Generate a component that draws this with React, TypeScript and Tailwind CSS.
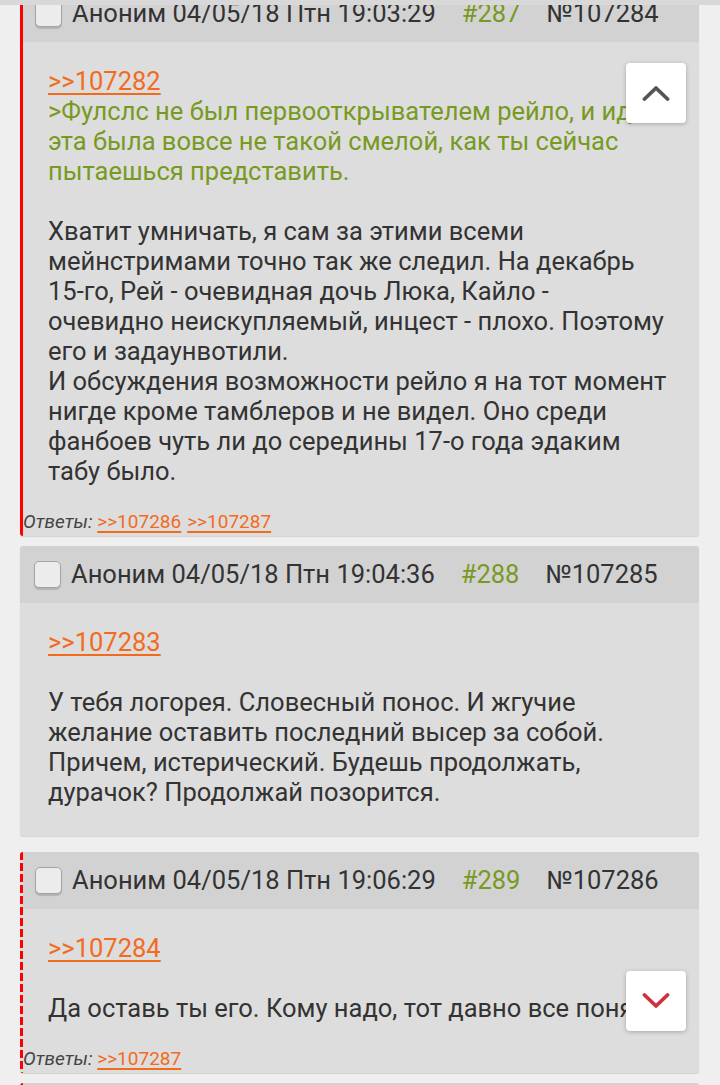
import React from "react";

type Post = {
  num: number;
  id: number;
  time: string;
  border: "solid" | "dashed" | "none";
  body?: React.ReactNode;
  replies?: number[];
  mb: string;
  pb: string;
};

function Link({ children }: { children: React.ReactNode }) {
  return (
    <span className="text-[#f26b1d] underline decoration-[1.5px] underline-offset-[3px]">{children}</span>
  );
}

function Green({ children }: { children: React.ReactNode }) {
  return <span className="text-[#789922]">{children}</span>;
}

function Checkbox() {
  return (
    <div className="h-[27px] w-[27px] shrink-0 rounded-[5px] border-[1.5px] border-[#a4a4a4] bg-[#ececec] shadow-[0_2px_1px_rgba(0,0,0,0.15)]" />
  );
}

function Strip({ kind }: { kind: Post["border"] }) {
  if (kind === "none") return null;
  if (kind === "solid") return <div className="w-[3px] shrink-0 self-stretch bg-[#ff0000]" />;
  return (
    <div className="w-[3px] shrink-0 self-stretch bg-[repeating-linear-gradient(to_bottom,#ff0000_0px,#ff0000_8px,transparent_8px,transparent_11px)]" />
  );
}

function PostCard({ p }: { p: Post }) {
  const edge = p.border === "none";
  return (
    <div className={`${p.mb} flex overflow-hidden rounded-[3px] bg-[#dddddd] shadow-[0_1px_1px_rgba(0,0,0,0.12)]`}>
      <Strip kind={p.border} />
      <div className="min-w-0 flex-1">
        <div className={`flex h-[57px] items-center bg-[#d2d2d2] ${edge ? "pl-[14px]" : "pl-[12px]"}`}>
          {p.body && (
            <>
              <Checkbox />
              <span className="ml-[10px] whitespace-nowrap text-[25.5px] text-[#333]">Аноним 04/05/18 Птн {p.time}</span>
              <span className="ml-[26px] text-[25.5px] text-[#789922]">#{p.num}</span>
              <span className="ml-[26px] text-[25.5px] text-[#333]">№{p.id}</span>
            </>
          )}
        </div>
        {p.body && (
          <div
            className={`${edge ? "px-[28px]" : "px-[25px]"} pt-[24px] ${p.pb} overflow-hidden whitespace-nowrap text-[25.5px] leading-[30px] text-[#333]`}
          >
            {p.body}
          </div>
        )}
        {p.replies && (
          <div className="h-[26px] whitespace-nowrap text-[19px] leading-[24px] text-[#444]">
            <span className="italic">Ответы: </span>
            {p.replies.map((r) => (
              <span key={r} className="mr-[6px]">
                <Link>&gt;&gt;{r}</Link>
              </span>
            ))}
          </div>
        )}
      </div>
    </div>
  );
}

const posts: Post[] = [
  {
    num: 287,
    id: 107284,
    time: "19:03:29",
    border: "solid",
    mb: "mb-[10px]",
    pb: "pb-[24px]",
    replies: [107286, 107287],
    body: (
      <>
        <Link>&gt;&gt;107282</Link>
        <br />
        <Green>
          &gt;Фулслс не был первооткрывателем рейло, и идея
          <br />
          эта была вовсе не такой смелой, как ты сейчас
          <br />
          пытаешься представить.
        </Green>
        <br />
        <br />
        Хватит умничать, я сам за этими всеми
        <br />
        мейнстримами точно так же следил. На декабрь
        <br />
        15-го, Рей - очевидная дочь Люка, Кайло -
        <br />
        очевидно неискупляемый, инцест - плохо. Поэтому
        <br />
        его и задаунвотили.
        <br />
        И обсуждения возможности рейло я на тот момент
        <br />
        нигде кроме тамблеров и не видел. Оно среди
        <br />
        фанбоев чуть ли до середины 17-о года эдаким
        <br />
        табу было.
      </>
    ),
  },
  {
    num: 288,
    id: 107285,
    time: "19:04:36",
    border: "none",
    mb: "mb-[16px]",
    pb: "pb-[29px]",
    body: (
      <>
        <Link>&gt;&gt;107283</Link>
        <br />
        <br />
        У тебя логорея. Словесный понос. И жгучие
        <br />
        желание оставить последний высер за собой.
        <br />
        Причем, истерический. Будешь продолжать,
        <br />
        дурачок? Продолжай позорится.
      </>
    ),
  },
  {
    num: 289,
    id: 107286,
    time: "19:06:29",
    border: "dashed",
    mb: "mb-[10px]",
    pb: "pb-[24px]",
    replies: [107287],
    body: (
      <>
        <Link>&gt;&gt;107284</Link>
        <br />
        <br />
        Да оставь ты его. Кому надо, тот давно все понял.
      </>
    ),
  },
  {
    num: 290,
    id: 107287,
    time: "19:07:12",
    border: "dashed",
    mb: "mb-[10px]",
    pb: "pb-[24px]",
  },
];

export default function App() {
  return (
    <div className="relative h-[1085px] w-[720px] overflow-hidden bg-[#efefef] font-[Roboto,'Noto_Sans',sans-serif]">
      <div className="-mt-[15px] pl-[20px] pr-[21px]">
        {posts.map((p) => (
          <PostCard key={p.id} p={p} />
        ))}
      </div>

      <div className="absolute left-0 right-0 top-0 h-[5px] bg-[#d8d8d8]" />

      <button className="absolute left-[626px] top-[63px] flex h-[60px] w-[60px] items-center justify-center rounded-[4px] bg-white shadow-[0_1px_4px_rgba(0,0,0,0.25)]">
        <svg width="28" height="16" viewBox="0 0 28 16" fill="none">
          <path d="M2.5 14 L14 3 L25.5 14" stroke="#555" strokeWidth="3.8" strokeLinecap="round" strokeLinejoin="round" />
        </svg>
      </button>

      <button className="absolute left-[626px] top-[971px] flex h-[60px] w-[60px] items-center justify-center rounded-[4px] bg-white shadow-[0_1px_4px_rgba(0,0,0,0.25)]">
        <svg width="28" height="16" viewBox="0 0 28 16" fill="none">
          <path d="M2.5 2 L14 13 L25.5 2" stroke="#cc3340" strokeWidth="3.8" strokeLinecap="round" strokeLinejoin="round" />
        </svg>
      </button>
    </div>
  );
}
